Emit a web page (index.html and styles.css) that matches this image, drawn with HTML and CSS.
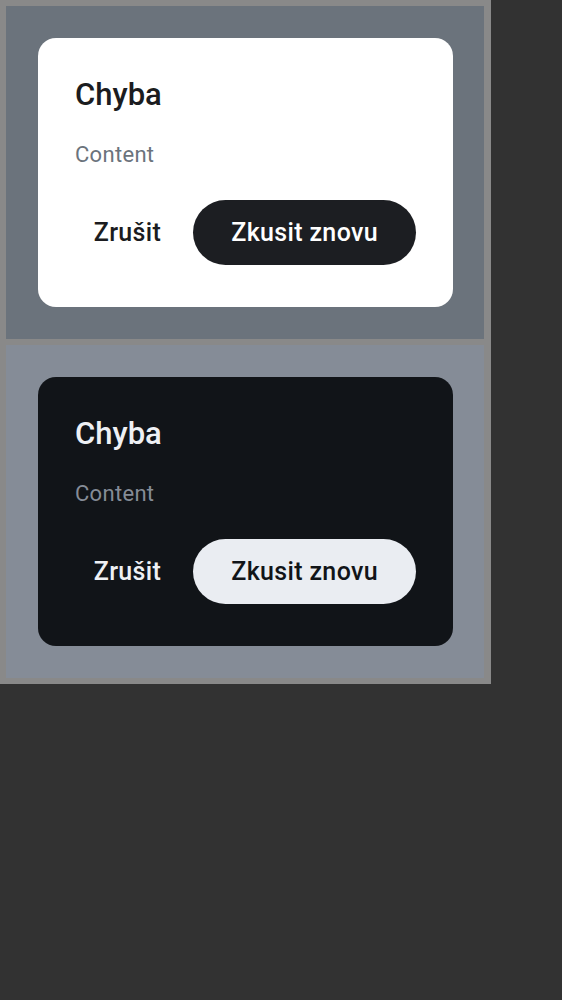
FILE: index.html
```html
<!DOCTYPE html>
<html>
<head>
<meta charset="utf-8">
<link rel="stylesheet" href="styles.css">
</head>
<body>
<div class="frame">
  <section class="panel panel-light">
    <div class="dialog dialog-light">
      <h2 class="title">Chyba</h2>
      <p class="content">Content</p>
      <div class="actions">
        <button class="btn-text">Zrušit</button>
        <button class="btn-filled">Zkusit znovu</button>
      </div>
    </div>
  </section>
  <section class="panel panel-dark">
    <div class="dialog dialog-dark">
      <h2 class="title">Chyba</h2>
      <p class="content">Content</p>
      <div class="actions">
        <button class="btn-text">Zrušit</button>
        <button class="btn-filled">Zkusit znovu</button>
      </div>
    </div>
  </section>
</div>
</body>
</html>
```
FILE: styles.css
```css
html, body {
  margin: 0;
  padding: 0;
  background: #323232;
  font-family: Roboto, "Noto Sans", sans-serif;
}
.frame {
  width: 478px;
  padding: 6px 7px 6px 6px;
  background: #898989;
  display: flex;
  flex-direction: column;
  gap: 6px;
}
.panel {
  padding: 32px 31px 32px 32px;
}
.panel-light { background: #6b737c; }
.panel-dark { background: #858c97; }
.dialog {
  border-radius: 18px;
  padding: 39px 37px 42px 37px;
}
.dialog-light { background: #ffffff; }
.dialog-dark { background: #111418; }
.title {
  margin: 0;
  font-size: 31px;
  line-height: 36px;
  font-weight: 500;
}
.content {
  margin: 28px 0 0 0;
  font-size: 22px;
  line-height: 28px;
  font-weight: 400;
  letter-spacing: 0.3px;
}
.actions {
  margin-top: 31px;
  display: flex;
  justify-content: flex-end;
  align-items: center;
  gap: 16px;
}
button {
  font-family: Roboto, "Noto Sans", sans-serif;
  font-size: 25px;
  font-weight: 500;
  letter-spacing: 0.35px;
  white-space: nowrap;
  height: 65px;
  border: none;
  border-radius: 33px;
  cursor: pointer;
}
.btn-text {
  background: transparent;
  padding: 0 16px;
}
.btn-filled {
  padding: 0 38px;
}
.dialog-light .title { color: #1b1c20; }
.dialog-light .content { color: #6b737c; }
.dialog-light .btn-text { color: #1b1c20; }
.dialog-light .btn-filled { background: #1c1e22; color: #ffffff; }
.dialog-dark .title { color: #eef0f4; }
.dialog-dark .content { color: #858c97; }
.dialog-dark .btn-text { color: #eef0f4; }
.dialog-dark .btn-filled { background: #eaedf2; color: #111418; }
```
